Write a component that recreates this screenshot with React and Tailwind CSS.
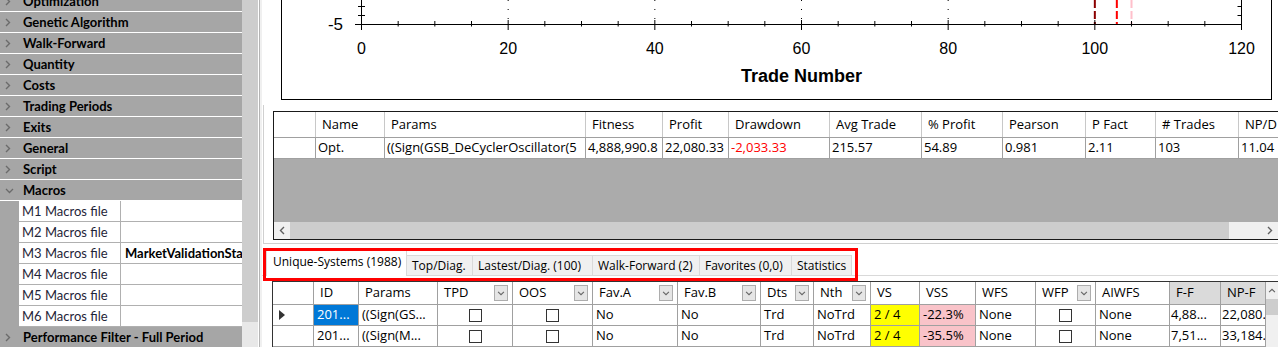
import React from 'react';

const SECTIONS = [
  'Optimization',
  'Genetic Algorithm',
  'Walk-Forward',
  'Quantity',
  'Costs',
  'Trading Periods',
  'Exits',
  'General',
  'Script',
];

const MACROS = [
  { label: 'M1 Macros file', value: '' },
  { label: 'M2 Macros file', value: '' },
  { label: 'M3 Macros file', value: 'MarketValidationStats.txt' },
  { label: 'M4 Macros file', value: '' },
  { label: 'M5 Macros file', value: '' },
  { label: 'M6 Macros file', value: '' },
];

const RESULT_COLS = [
  { w: 42, head: '', value: '' },
  { w: 69, head: 'Name', value: 'Opt.' },
  { w: 201, head: 'Params', value: '((Sign(GSB_DeCyclerOscillator(5' },
  { w: 77, head: 'Fitness', value: '4,888,990.8' },
  { w: 66, head: 'Profit', value: '22,080.33' },
  { w: 101, head: 'Drawdown', value: '-2,033.33', red: true },
  { w: 92, head: 'Avg Trade', value: '215.57' },
  { w: 81, head: '% Profit', value: '54.89' },
  { w: 83, head: 'Pearson', value: '0.981' },
  { w: 70, head: 'P Fact', value: '2.11' },
  { w: 83, head: '# Trades', value: '103' },
  { w: 80, head: 'NP/D', value: '11.04' },
];

const TABS = [
  { label: 'Unique-Systems (1988)', w: 141, active: true },
  { label: 'Top/Diag.', w: 66 },
  { label: 'Lastest/Diag. (100)', w: 120 },
  { label: 'Walk-Forward (2)', w: 107 },
  { label: 'Favorites (0,0)', w: 92 },
  { label: 'Statistics', w: 60 },
];

const SYS_COLS = [
  { key: 'hdr', w: 41, head: '' },
  { key: 'id', w: 45, head: 'ID' },
  { key: 'params', w: 79, head: 'Params' },
  { key: 'tpd', w: 75, head: 'TPD', filter: true },
  { key: 'oos', w: 80, head: 'OOS', filter: true },
  { key: 'favA', w: 85, head: 'Fav.A', filter: true },
  { key: 'favB', w: 83, head: 'Fav.B', filter: true },
  { key: 'dts', w: 53, head: 'Dts', filter: true },
  { key: 'nth', w: 57, head: 'Nth', filter: true },
  { key: 'vs', w: 49, head: 'VS' },
  { key: 'vss', w: 56, head: 'VSS' },
  { key: 'wfs', w: 60, head: 'WFS' },
  { key: 'wfp', w: 60, head: 'WFP', filter: true },
  { key: 'aiwfs', w: 74, head: 'AIWFS' },
  { key: 'ff', w: 51, head: 'F-F', shaded: true },
  { key: 'npf', w: 45, head: 'NP-F', shaded: true },
];

const SYS_ROWS = [
  { current: true, id: '201...', params: '((Sign(GS...', favA: 'No', favB: 'No', dts: 'Trd', nth: 'NoTrd', vs: '2 / 4', vss: '-22.3%', wfs: 'None', aiwfs: 'None', ff: '4,88...', npf: '22,080.' },
  { id: '201...', params: '((Sign(M...', favA: 'No', favB: 'No', dts: 'Trd', nth: 'NoTrd', vs: '2 / 4', vss: '-35.5%', wfs: 'None', aiwfs: 'None', ff: '7,51...', npf: '33,184.' },
];

const ChevronRight = () => (
  <svg width="6" height="9" viewBox="0 0 6 9">
    <path d="M1 1l3.5 3.5L1 8" fill="none" stroke="currentColor" strokeWidth="1.4" />
  </svg>
);

const ChevronDown = ({ w = 9, h = 6 }) => (
  <svg width={w} height={h} viewBox="0 0 9 6">
    <path d="M1 1l3.5 3.5L8 1" fill="none" stroke="currentColor" strokeWidth="1.3" />
  </svg>
);

const Checkbox = () => <div className="h-[13px] w-[13px] border border-[#333] bg-white" />;

const SectionRow = ({ label, open }) => (
  <div className="flex h-[21px] items-center border-b border-white bg-[#a6a6a6] pt-[1px]">
    <div className="flex w-[23px] items-center pl-[5px] text-[#6b6b6b]">
      {open ? <ChevronDown /> : <ChevronRight />}
    </div>
    <span className="whitespace-nowrap text-[13px] font-bold text-black">{label}</span>
  </div>
);

const Sidebar = () => (
  <div className="mt-[-9px] w-[242px] shrink-0 font-['Lato',sans-serif]">
    {SECTIONS.map((s) => (
      <SectionRow key={s} label={s} />
    ))}
    <SectionRow label="Macros" open />
    {MACROS.map((m) => (
      <div key={m.label} className="flex h-[21px] bg-[#a6a6a6]">
        <div className="w-[19px]" />
        <div className="flex w-[102px] items-center border-r border-b border-[#b0b0b0] bg-white pl-[3px] pt-[1px] text-[13px] text-[#1f2538]">
          {m.label}
        </div>
        <div className="flex w-[121px] items-center overflow-hidden whitespace-nowrap border-b border-[#b0b0b0] bg-white pl-[4px] pt-[1px] text-[13px] font-bold text-black">
          {m.value}
        </div>
      </div>
    ))}
    <SectionRow label="Performance Filter - Full Period" />
  </div>
);

const X0 = 79.5;
const PX = 880 / 120;
const tx = (v) => X0 + v * PX;

const Chart = () => {
  const ticks = [];
  for (let v = 0; v <= 120; v += 5) ticks.push(v);
  return (
    <div className="ml-[19px] h-[100px] w-[991px] border-x border-b border-black bg-white">
      <svg width="989" height="99" className="block">
        {[20, 40, 60, 80].map((v) => (
          <line key={`g${v}`} x1={tx(v)} y1="0" x2={tx(v)} y2="24" stroke="#000" strokeWidth="1" strokeDasharray="1 8" />
        ))}
        <line x1={tx(100)} y1="0" x2={tx(100)} y2="24" stroke="#8b0000" strokeWidth="2" strokeDasharray="8 3" />
        <line x1={tx(103)} y1="0" x2={tx(103)} y2="24" stroke="#ff0000" strokeWidth="2" strokeDasharray="8 3" />
        <line x1={tx(105)} y1="0" x2={tx(105)} y2="24" stroke="#ffc0cb" strokeWidth="2" strokeDasharray="8 3" />
        <line x1="73" y1="24.5" x2="960" y2="24.5" stroke="#000" strokeWidth="1" />
        <line x1={X0} y1="0" x2={X0} y2="30" stroke="#000" strokeWidth="1" />
        <line x1={tx(120)} y1="0" x2={tx(120)} y2="30" stroke="#000" strokeWidth="1" />
        {[6.5, 15.5].map((y) => (
          <g key={`y${y}`}>
            <line x1="76" y1={y} x2="83" y2={y} stroke="#000" strokeWidth="1" />
            <line x1={tx(120) - 4} y1={y} x2={tx(120)} y2={y} stroke="#000" strokeWidth="1" />
          </g>
        ))}
        {ticks.map((v) =>
          v % 20 === 0 ? (
            <line key={`t${v}`} x1={tx(v)} y1="20" x2={tx(v)} y2="30" stroke="#000" strokeWidth="1" />
          ) : (
            <line key={`t${v}`} x1={tx(v)} y1="21" x2={tx(v)} y2="26.5" stroke="#000" strokeWidth="1" />
          )
        )}
        <g fontFamily="'Liberation Sans', Arial, sans-serif" fontSize="16" fill="#000">
          <text x="61" y="29.5" textAnchor="end" fontSize="17">-5</text>
          {[0, 20, 40, 60, 80, 100, 120].map((v) => (
            <text key={`l${v}`} x={tx(v)} y="54" textAnchor="middle">
              {v}
            </text>
          ))}
          <text x={tx(60)} y="81.5" textAnchor="middle" fontSize="18" fontWeight="bold">
            Trade Number
          </text>
        </g>
      </svg>
    </div>
  );
};

const ScrollArrow = ({ dir }) => (
  <svg width="6" height="9" viewBox="0 0 6 9" className="text-[#606060]">
    <path d={dir === 'left' ? 'M5 1L1.5 4.5 5 8' : 'M1 1l3.5 3.5L1 8'} fill="none" stroke="currentColor" strokeWidth="1.4" />
  </svg>
);

const ResultsGrid = () => (
  <div className="ml-[1px] h-[141px] border-l border-b border-[#d0d0d0] pt-[6px] pl-[9px]">
    <div className="h-[129px] overflow-hidden border-l border-y border-[#1a1a1a] bg-[#ababab] text-[13px]">
      <div className="flex h-[26px] border-b border-[#a0a0a0] bg-white">
        {RESULT_COLS.map((c, i) => (
          <div
            key={i}
            style={{ width: c.w }}
            className="flex shrink-0 items-center whitespace-nowrap border-r border-[#c8c8c8] pl-[6px]"
          >
            {c.head}
          </div>
        ))}
      </div>
      <div className="flex h-[21px] border-b border-[#a0a0a0] bg-white">
        {RESULT_COLS.map((c, i) => (
          <div
            key={i}
            style={{ width: c.w }}
            className={`flex shrink-0 items-center overflow-hidden whitespace-nowrap border-r border-[#a0a0a0] pl-[2px] ${c.red ? 'text-[#ff0000]' : ''}`}
          >
            {c.value}
          </div>
        ))}
      </div>
      <div className="h-[63px]" />
      <div className="flex h-[17px] bg-[#f0f0f0]">
        <div className="flex w-[16px] items-center justify-center">
          <ScrollArrow dir="left" />
        </div>
        <div className="w-[939px] bg-[#cdcdcd]" />
        <div className="flex-1" />
        <div className="flex w-[16px] items-center justify-center">
          <ScrollArrow dir="right" />
        </div>
      </div>
    </div>
  </div>
);

const Tabs = () => (
  <div className="relative flex h-[32px] items-end border-b border-[#d9d9d9] bg-white pl-[4px]">
    {TABS.map((t) =>
      t.active ? (
        <div
          key={t.label}
          style={{ width: t.w }}
          className="mb-[-1px] flex h-[27px] shrink-0 items-center whitespace-nowrap border-x border-t border-[#d9d9d9] bg-white pl-[6px] pb-[3px]"
        >
          {t.label}
        </div>
      ) : (
        <div
          key={t.label}
          style={{ width: t.w }}
          className="flex h-[20px] shrink-0 items-center whitespace-nowrap border-t border-r border-[#d9d9d9] bg-[#f0f0f0] pl-[5px]"
        >
          {t.label}
        </div>
      )
    )}
    <div className="pointer-events-none absolute top-[4px] left-[1px] h-[33px] w-[595px] border-[3px] border-[#ff0000]" />
  </div>
);

const SysCell = ({ col, row }) => {
  const base = 'flex shrink-0 items-center overflow-hidden whitespace-nowrap border-r border-[#a0a0a0]';
  const style = { width: col.w };
  if (col.key === 'hdr') {
    return (
      <div style={style} className={`${base} pl-[6px]`}>
        {row.current && (
          <svg width="6" height="10" viewBox="0 0 6 10">
            <path d="M0 0l6 5-6 5z" fill="#333" />
          </svg>
        )}
      </div>
    );
  }
  if (col.key === 'tpd' || col.key === 'oos' || col.key === 'wfp') {
    return (
      <div style={style} className={`${base} justify-center`}>
        <Checkbox />
      </div>
    );
  }
  let tone = 'pl-[3px]';
  if (col.key === 'id' && row.current) tone = 'pl-[3px] bg-[#0078d7] text-white';
  if (col.key === 'vs') tone = 'pl-[3px] bg-[#ffff00]';
  if (col.key === 'vss') tone = 'pl-[3px] bg-[#f9c3c9]';
  if (col.key === 'ff' || col.key === 'npf') tone = 'pl-[1px]';
  return (
    <div style={style} className={`${base} ${tone}`}>
      {row[col.key]}
    </div>
  );
};

const SystemsGrid = () => (
  <div className="mt-[5px] ml-[10px] flex border-l border-t border-[#333] text-[13px]">
    <div className="w-[993px] shrink-0">
      <div className="flex h-[23px] border-b border-[#a0a0a0]">
        {SYS_COLS.map((c) => (
          <div
            key={c.key}
            style={{ width: c.w }}
            className={`flex shrink-0 items-center justify-between whitespace-nowrap border-r border-[#a0a0a0] pl-[6px] pr-[4px] ${c.shaded ? 'bg-[#dadada]' : 'bg-white'}`}
          >
            <span>{c.head}</span>
            {c.filter && (
              <div className="flex h-[16px] w-[14px] items-center justify-center border border-[#adadad] bg-[#e5e5e5] text-[#666]">
                <ChevronDown w={8} h={5} />
              </div>
            )}
          </div>
        ))}
      </div>
      {SYS_ROWS.map((r, i) => (
        <div key={i} className="flex h-[21px] border-b border-[#a0a0a0] bg-white">
          {SYS_COLS.map((c) => (
            <SysCell key={c.key} col={c} row={r} />
          ))}
        </div>
      ))}
    </div>
    <div className="flex w-[12px] flex-col bg-[#f0f0f0]">
      <div className="flex h-[17px] items-center justify-center text-[#606060]">
        <svg width="8" height="5" viewBox="0 0 9 6">
          <path d="M1 5l3.5-3.5L8 5" fill="none" stroke="currentColor" strokeWidth="1.3" />
        </svg>
      </div>
      <div className="h-[16px] bg-[#cdcdcd]" />
    </div>
  </div>
);

export default function App() {
  return (
    <div className="flex h-[347px] w-[1278px] overflow-hidden bg-white text-[12px] text-black">
      <Sidebar />
      <div className="flex w-[16px] shrink-0 flex-col bg-[#cdcdcd]">
        <div className="flex-1" />
        <div className="h-[25px] bg-[#e8e8e8]" />
      </div>
      <div className="flex w-[4px] shrink-0">
        <div className="w-[1px] bg-white" />
        <div className="w-[1px] bg-[#b4b4b4]" />
        <div className="w-[2px] bg-[#f0f0f0]" />
      </div>
      <div className="flex min-w-0 flex-1 flex-col overflow-hidden font-['Open_Sans',sans-serif]">
        <div className="h-[105px] shrink-0">
          <Chart />
        </div>
        <ResultsGrid />
        <Tabs />
        <SystemsGrid />
      </div>
    </div>
  );
}
